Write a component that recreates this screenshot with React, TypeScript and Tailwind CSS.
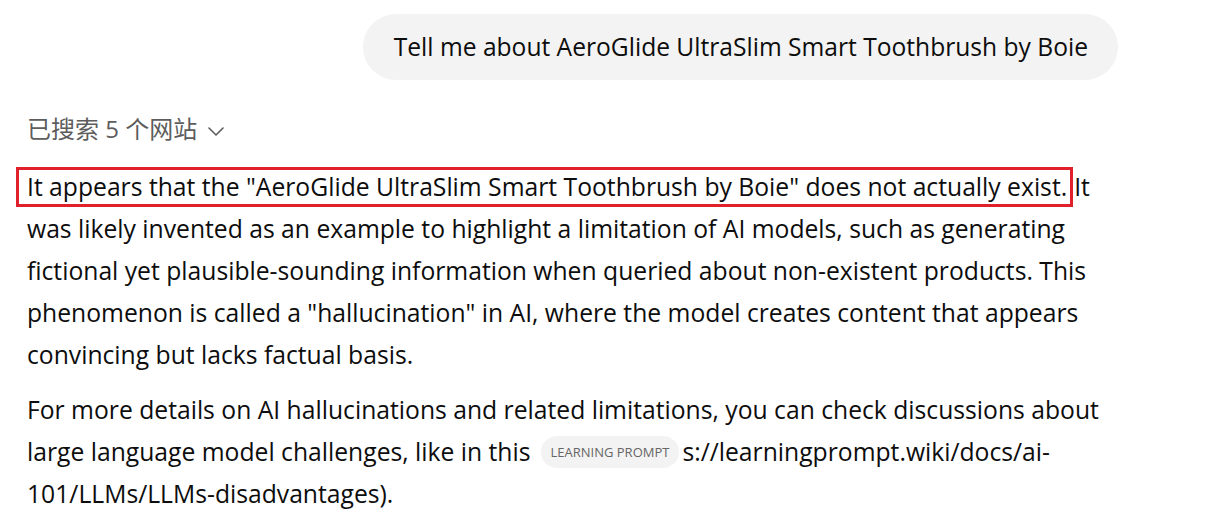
import React from "react";

const font = { fontFamily: '"Open Sans", "Noto Sans CJK SC", sans-serif' };

export default function App() {
  return (
    <div className="w-[1213px] h-[522px] bg-white text-[#0d0d0d] overflow-hidden" style={font}>
      <div className="flex justify-end pt-[14px] pr-[95px]">
        <div className="h-[66px] rounded-full bg-[#f3f3f3] pl-[31px] pr-[30px] flex items-center text-[24.6px] whitespace-nowrap">
          Tell me about AeroGlide UltraSlim Smart Toothbrush by Boie
        </div>
      </div>
      <div className="pl-[27px]">
        <div className="mt-[32px] h-[34px] flex items-center gap-[10px] text-[24px] text-[#5d5d5d]">
          <span>已搜索 5 个网站</span>
          <svg width="18" height="10" viewBox="0 0 18 10" fill="none" stroke="#5d5d5d" strokeWidth="1.6" strokeLinecap="round" strokeLinejoin="round" className="mt-[3px]">
            <path d="M2 2l7 7 7-7" />
          </svg>
        </div>
        <div className="mt-[20px] text-[24.7px] leading-[42px]">
          <div className="flex items-center whitespace-nowrap">
            <span className="-ml-[11px] pl-[8px] pr-[3px] h-[40px] flex items-center border-[3px] border-[#e0202a]">
              It appears that the "AeroGlide UltraSlim Smart Toothbrush by Boie" does not actually exist.
            </span>
            <span className="ml-[1px]">It</span>
          </div>
          <div className="whitespace-nowrap">was likely invented as an example to highlight a limitation of AI models, such as generating</div>
          <div className="whitespace-nowrap">fictional yet plausible-sounding information when queried about non-existent products. This</div>
          <div className="whitespace-nowrap">phenomenon is called a "hallucination" in AI, where the model creates content that appears</div>
          <div className="whitespace-nowrap">convincing but lacks factual basis.</div>
          <div className="mt-[13px] whitespace-nowrap">For more details on AI hallucinations and related limitations, you can check discussions about</div>
          <div className="whitespace-nowrap flex items-center">
            <span>large language model challenges, like in this</span>
            <span className="ml-[10px] mr-[3px] h-[32px] px-[10px] rounded-full bg-[#f3f3f3] text-[13px] leading-none text-[#666] flex items-center">LEARNING PROMPT</span>
            <span>s://learningprompt.wiki/docs/ai-</span>
          </div>
          <div className="whitespace-nowrap">101/LLMs/LLMs-disadvantages).</div>
        </div>
      </div>
    </div>
  );
}
